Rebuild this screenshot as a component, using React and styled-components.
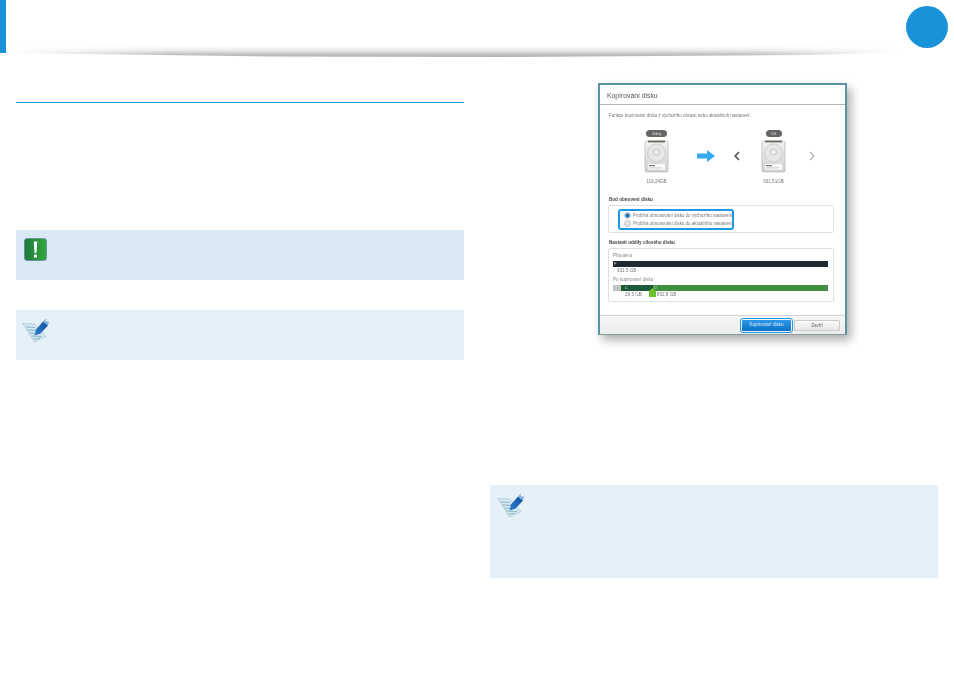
import styled, { createGlobalStyle } from "styled-components";

const GlobalStyle = createGlobalStyle`
  html, body {
    margin: 0;
    padding: 0;
    background: #fff;
    font-family: "Liberation Sans", Arial, sans-serif;
  }
`;

const Page = styled.div`
  width: 954px;
  height: 677px;
  overflow: hidden;
`;

const Header = styled.header`
  position: relative;
  height: 53px;
  display: flex;
  justify-content: space-between;
  padding-right: 6px;
  &::after {
    content: "";
    position: absolute;
    left: 6px;
    top: 44px;
    width: 900px;
    height: 14px;
    background: linear-gradient(to bottom, #fff 15%, #ebebeb 45%, #c6c6c6 70%, #adadad 95%);
    clip-path: polygon(0 0, 100% 0, 100% 58%, 89% 78%, 55% 93%, 30% 90%, 0 64%);
    mask-image: linear-gradient(to right, transparent 0, #000 18%, #000 82%, transparent 100%);
    filter: blur(0.6px);
  }
`;

const Tab = styled.div`
  width: 6px;
  height: 53px;
  background: #1a92d9;
  position: relative;
  z-index: 1;
`;

const Badge = styled.div`
  width: 42px;
  height: 42px;
  margin-top: 6px;
  border-radius: 50%;
  background: #1a92d9;
  position: relative;
  z-index: 1;
`;

const Columns = styled.main`
  display: grid;
  grid-template-columns: 448px 448px;
  column-gap: 26px;
  padding: 0 16px;
`;

const LeftColumn = styled.section`
  padding-top: 49px;
`;

const Rule = styled.div`
  height: 1px;
  background: #1a98d8;
  margin-bottom: 127px;
`;

const Notice = styled.div`
  height: ${(props) => props.$height}px;
  margin-bottom: 30px;
  background: ${(props) => props.$bg};
  box-sizing: border-box;
  padding: ${(props) => props.$pad};
  display: flex;
  align-items: flex-start;
`;

const RightColumn = styled.section`
  padding-top: 30px;
  display: flex;
  flex-direction: column;
`;

const Dialog = styled.div`
  width: 249px;
  height: 252px;
  margin: 0 0 150px 108px;
  box-sizing: border-box;
  border: 2px solid #5a93aa;
  border-bottom-width: 1px;
  border-bottom-color: #8a9aa3;
  background: #fff;
  box-shadow: 4px 5px 9px rgba(0, 0, 0, 0.32);
  display: flex;
  flex-direction: column;
  filter: blur(0.4px);
  color: #555;
`;

const TitleBar = styled.div`
  height: 20px;
  box-sizing: border-box;
  border-bottom: 1px solid #b5b5b5;
  padding: 2px 0 0 7px;
  display: flex;
  align-items: center;
  font-size: 6.8px;
  color: #555;
`;

const Content = styled.div`
  flex: 1;
  padding: 7px 9px 0 9px;
  display: flex;
  flex-direction: column;
`;

const Desc = styled.div`
  font-size: 4.45px;
  line-height: 7px;
  color: #777;
  margin-bottom: 11px;
`;

const Drives = styled.div`
  display: flex;
  align-items: flex-start;
  height: 59px;
  margin-bottom: 8px;
`;

const DriveItem = styled.div`
  width: ${(props) => props.$width}px;
  margin-left: ${(props) => props.$offset}px;
  display: flex;
  flex-direction: column;
  align-items: center;
`;

const Pill = styled.div`
  width: ${(props) => props.$width}px;
  height: 7px;
  border-radius: 4px;
  background: #666;
  color: #e8e8e8;
  font-size: 4px;
  line-height: 7px;
  text-align: center;
  margin-bottom: 3px;
`;

const SizeLabel = styled.div`
  font-size: 4.6px;
  line-height: 6px;
  color: #777;
  margin-top: 6px;
`;

const NavIcon = styled.svg`
  flex: none;
  margin-left: ${(props) => props.$offset}px;
  margin-top: ${(props) => props.$top}px;
`;

const GroupLabel = styled.div`
  font-size: 4.6px;
  font-weight: bold;
  line-height: 6px;
  color: #444;
  margin-bottom: 2px;
`;

const Group = styled.div`
  height: ${(props) => props.$height}px;
  box-sizing: border-box;
  border: 1px solid #e0e0e0;
  border-radius: 2px;
  padding: ${(props) => props.$pad};
  margin: 0 2px 7px -1px;
`;

const Highlight = styled.div`
  width: 116px;
  height: 21px;
  box-sizing: border-box;
  border: 2px solid #1f9ae2;
  border-radius: 3px;
  padding: 0.5px 0 0 3.5px;
`;

const RadioRow = styled.div`
  display: flex;
  align-items: center;
  height: 8.5px;
  font-size: 4.45px;
  color: #777;
  white-space: nowrap;
`;

const Radio = styled.span`
  flex: none;
  width: 5px;
  height: 5px;
  border-radius: 50%;
  margin-right: 2.5px;
  border: 0.5px solid #c4c4c4;
  background: ${(props) => (props.$on ? "radial-gradient(circle, #1672c4 45%, #d5e5f2 80%)" : "#e4e4e4")};
`;

const PartLabel = styled.div`
  font-size: 4.6px;
  line-height: 6px;
  color: #888;
  margin-bottom: ${(props) => props.$gap}px;
`;

const Bar = styled.div`
  display: flex;
  height: 6px;
`;

const BarPart = styled.div`
  width: ${(props) => props.$width}px;
  flex: ${(props) => (props.$grow ? 1 : "none")};
  background: ${(props) => props.$bg};
  color: #ddd;
  font-size: 4px;
  line-height: 6px;
  padding-left: ${(props) => props.$pad || 0}px;
  box-sizing: border-box;
`;

const BarValues = styled.div`
  position: relative;
  display: flex;
  height: 6px;
  margin-bottom: ${(props) => props.$gap}px;
  padding-left: ${(props) => props.$pad}px;
  font-size: 4.6px;
  line-height: 7px;
  color: #777;
  gap: ${(props) => props.$between}px;
`;

const Handle = styled.svg`
  position: absolute;
  left: 36px;
  top: -3px;
`;

const Footer = styled.div`
  height: 19px;
  box-sizing: border-box;
  border-top: 1px solid #d4d4d4;
  background: linear-gradient(#f6f6f6, #ececec);
  display: flex;
  justify-content: flex-end;
  align-items: center;
  padding: 0 5px 0 0;
  gap: 3px;
`;

const Button = styled.div`
  height: 11px;
  width: ${(props) => (props.$primary ? 49 : 46)}px;
  box-sizing: border-box;
  background: ${(props) => (props.$primary ? "linear-gradient(#2b97e6, #0f72c6)" : "linear-gradient(#fafafa, #e6e6e6)")};
  border: ${(props) => (props.$primary ? "none" : "1px solid #ccc")};
  color: ${(props) => (props.$primary ? "#d8ecfa" : "#666")};
  font-size: 4.6px;
  line-height: 10px;
  text-align: center;
  outline: ${(props) => (props.$primary ? "1.5px solid #1f9ae2" : "none")};
  outline-offset: 1px;
  border-radius: 1px;
`;

const SoftSvg = styled.svg`
  flex: none;
  filter: blur(0.35px);
`;

const WarningIcon = () => (
  <SoftSvg width="23" height="23" viewBox="0 0 23 23">
    <defs>
      <linearGradient id="warnFill" x1="0" y1="0" x2="1" y2="0">
        <stop offset="0" stopColor="#1c7a3a" />
        <stop offset="1" stopColor="#35a83c" />
      </linearGradient>
    </defs>
    <rect x="0.4" y="0.4" width="22.2" height="22.2" rx="3" fill="url(#warnFill)" stroke="#5f86a8" strokeWidth="0.8" />
    <path d="M9.8 3.5 h3.4 l-0.7 11.5 h-2 z" fill="#fff" />
    <rect x="10" y="16.5" width="3" height="3" rx="0.6" fill="#fff" />
  </SoftSvg>
);

const NoteIcon = ({ id }) => (
  <SoftSvg width="27" height="24" viewBox="0 0 27 24">
    <defs>
      <linearGradient id={id} x1="0" y1="1" x2="1" y2="0">
        <stop offset="0" stopColor="#2a7fcf" />
        <stop offset="1" stopColor="#174f9c" />
      </linearGradient>
    </defs>
    <path d="M0.8 5.5 L13 6 L24 18.5 L12.5 24 Z" fill="#d4e6ee" stroke="#9cc0d0" strokeWidth="0.6" />
    <path d="M4 9 L13 9.5 M5.5 12 L16 12.5 M7.5 15 L18 15.5 M9.5 18 L20 18.5 M11.5 21 L18 20.5" stroke="#86afc6" strokeWidth="0.9" />
    <path d="M12.5 17.5 L14 11.5 L21 3.5 L26 7.5 L18.5 15.5 Z" fill={`url(#${id})`} />
    <path d="M21 3.5 L23.5 1 L26.8 3.5 L26 7.5 Z" fill="#7fb0dc" />
    <circle cx="24.6" cy="2.8" r="1" fill="#fff" />
  </SoftSvg>
);

const DriveIcon = ({ id }) => (
  <svg width="25" height="33" viewBox="0 0 25 33">
    <defs>
      <linearGradient id={id} x1="0" y1="0" x2="0" y2="1">
        <stop offset="0" stopColor="#f2f2f2" />
        <stop offset="1" stopColor="#d2d2d2" />
      </linearGradient>
    </defs>
    <rect x="1" y="1" width="23" height="31" rx="1.5" fill={`url(#${id})`} stroke="#b4b4b4" strokeWidth="0.7" />
    <rect x="4" y="0.6" width="17" height="1.8" fill="#6a6a60" />
    <circle cx="12.5" cy="13" r="9" fill="#e6e6e6" stroke="#bdbdbd" strokeWidth="0.6" />
    <circle cx="12.5" cy="12" r="3" fill="#eee" stroke="#aaa" strokeWidth="0.6" />
    <rect x="3.5" y="23.5" width="18" height="6.5" fill="#fafafa" stroke="#c4c4c4" strokeWidth="0.4" />
    <rect x="5" y="25" width="6" height="1.2" fill="#777" />
    <rect x="5" y="27.5" width="13" height="0.8" fill="#bbb" />
  </svg>
);

const App = () => (
  <Page>
    <GlobalStyle />
    <Header>
      <Tab />
      <Badge />
    </Header>
    <Columns>
      <LeftColumn>
        <Rule />
        <Notice $height={50} $bg="#d9e9f6" $pad="8px 0 0 8px">
          <WarningIcon />
        </Notice>
        <Notice $height={50} $bg="#e5f0f9" $pad="8px 0 0 6px">
          <NoteIcon id="penLeft" />
        </Notice>
      </LeftColumn>
      <RightColumn>
        <Dialog>
          <TitleBar>Kopírování disku</TitleBar>
          <Content>
            <Desc>Funkce kopírování disku z výchozího obrazu nebo aktuálních nastavení.</Desc>
            <Drives>
              <DriveItem $width={25} $offset={35}>
                <Pill $width={21}>Zdroj</Pill>
                <DriveIcon id="driveSource" />
                <SizeLabel>119,24GB</SizeLabel>
              </DriveItem>
              <NavIcon $offset={28} $top={20} width="18" height="12" viewBox="0 0 18 12">
                <path d="M0 3.5 H10 V0 L18 6 L10 12 V8.5 H0 Z" fill="#35a9f2" />
              </NavIcon>
              <NavIcon $offset={19} $top={21} width="6" height="10" viewBox="0 0 6 10">
                <path d="M5 1 L1.2 5 L5 9" fill="none" stroke="#555" strokeWidth="1.7" />
              </NavIcon>
              <DriveItem $width={25} $offset={21}>
                <Pill $width={16}>Cíl</Pill>
                <DriveIcon id="driveTarget" />
                <SizeLabel>931,51GB</SizeLabel>
              </DriveItem>
              <NavIcon $offset={23} $top={21} width="6" height="10" viewBox="0 0 6 10">
                <path d="M1 1 L4.8 5 L1 9" fill="none" stroke="#bdbdbd" strokeWidth="1.7" />
              </NavIcon>
            </Drives>
            <GroupLabel>Bod obnovení disku</GroupLabel>
            <Group $height={28} $pad="2.5px 0 0 9px">
              <Highlight>
                <RadioRow>
                  <Radio $on />
                  Probíhá obnovování disku do výchozího nastavení
                </RadioRow>
                <RadioRow>
                  <Radio />
                  Probíhá obnovování disku do aktuálního nastavení
                </RadioRow>
              </Highlight>
            </Group>
            <GroupLabel>Nastavit oddíly cílového disku</GroupLabel>
            <Group $height={54} $pad="4px 5px 0 4px">
              <PartLabel $gap={2}>Připojeno</PartLabel>
              <Bar>
                <BarPart $grow $bg="#1f2a32" $pad={1}>F</BarPart>
              </Bar>
              <BarValues $pad={4} $between={0} $gap={4}>931,5 GB</BarValues>
              <PartLabel $gap={2}>Po kopírování disku</PartLabel>
              <Bar>
                <BarPart $width={8} $bg="#c4c4c4" />
                <BarPart $width={32} $bg="#1d5a36" $pad={4}>C</BarPart>
                <BarPart $grow $bg="#3e8f3f" $pad={1}>D</BarPart>
              </Bar>
              <BarValues $pad={12} $between={15} $gap={0}>
                <span>29,5 GB</span>
                <span>892,8 GB</span>
                <Handle width="7" height="9" viewBox="0 0 7 9">
                  <path d="M0 3 L3.5 0 L7 3 V9 H0 Z" fill="#6cc22c" />
                </Handle>
              </BarValues>
            </Group>
          </Content>
          <Footer>
            <Button $primary>Kopírování disku</Button>
            <Button>Zavřít</Button>
          </Footer>
        </Dialog>
        <Notice $height={93} $bg="#e5f0f9" $pad="8px 0 0 7px">
          <NoteIcon id="penRight" />
        </Notice>
      </RightColumn>
    </Columns>
  </Page>
);

export default App;
